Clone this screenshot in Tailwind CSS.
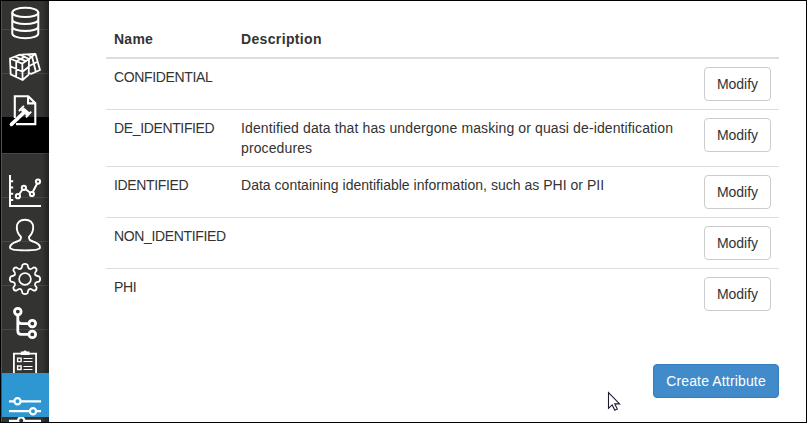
<!DOCTYPE html>
<html lang="en">
<head>
<meta charset="utf-8">
<title>Attributes</title>
<script src="https://cdn.jsdelivr.net/npm/@tailwindcss/browser@4"></script>
</head>
<body class="bg-white">
<div class="flex w-[807px] h-[423px] overflow-hidden border border-black bg-white font-['Liberation_Sans',Arial,sans-serif] text-sm leading-5 text-[#333]">
  <nav class="w-12 h-full shrink-0 flex flex-col overflow-hidden border-l border-[#40517a] bg-[linear-gradient(to_right,transparent_40px,#00000055_47px),linear-gradient(#333331_28px,#484846_28px,#484846_29px,#333331_29px,#333331_72px,#484846_72px,#484846_73px,#333331_73px,#333331_116px,#000_116px,#000_152px,#484846_152px,#484846_153px,#333331_153px,#333331_196px,#484846_196px,#484846_197px,#333331_197px,#333331_240px,#484846_240px,#484846_241px,#333331_241px,#333331_284px,#484846_284px,#484846_285px,#333331_285px,#333331_328px,#484846_328px,#484846_329px,#333331_329px)]">
    <svg class="w-[47px] h-11 shrink-0" viewBox="2 1 47 44" fill="none" stroke="#fff" stroke-width="2">
      <ellipse cx="25.3" cy="12.4" rx="13" ry="4.7"/>
      <path d="M12.3 12.4V33.6C12.3 36.2 18 38.3 25.3 38.3S38.3 36.2 38.3 33.6V12.4M12.3 19.4C12.3 22 18 24.1 25.3 24.1S38.3 22 38.3 19.4M12.3 26.4C12.3 29 18 31.1 25.3 31.1S38.3 29 38.3 26.4"/>
    </svg>
    <svg class="w-[47px] h-11 shrink-0" viewBox="2 45 47 44" fill="none" stroke="#fff" stroke-width="1.8" stroke-linejoin="round">
      <path d="M10 58.5L20 54.6L29 59L28.7 74.6L22.6 80L10.7 74.4ZM10 58.5L22.3 63.6L29 59M22.3 63.6L22.6 80M16.2 61.2V77M10.4 66.3L22.5 71.8L28.8 66.8M14.8 56.6L26 61.2M16.2 61.2L24.8 56.8"/>
      <path d="M21.5 54.6L35.4 53.8L40 70L31.2 73.8L29 73M29 59L35.4 53.8M29.2 66L37.5 61.8M32.2 57L35.8 71.8M27.5 54.4L31.8 56.9"/>
    </svg>
    <svg class="w-[47px] h-11 shrink-0" viewBox="2 89 47 44" fill="none" stroke="#fff" stroke-width="2.1">
      <path d="M14.8 118V96.2H28.3L35.3 103.2V124.1H16M28.1 96V103.4H35.4"/>
      <path d="M11.4 124.4L23.5 113" stroke-width="3.6" stroke-linecap="round"/>
      <path d="M20.6 110.6L23.8 107.4L30 112.8L26.7 116Z" fill="#fff" stroke="none"/>
      <path d="M18.9 111L23.9 105.8M26 117.3L31.2 111.6" stroke-width="1.9"/>
    </svg>
    <div class="h-9 shrink-0"></div>
    <svg class="w-[47px] h-11 shrink-0" viewBox="2 169 47 44" fill="none" stroke="#fff" stroke-width="2">
      <path d="M10 175V206H41M10 181.3H13.2M10 187.5H13.2M10 193.7H13.2M10 199.9H13.2"/>
      <path d="M19.2 194.3L22.5 189.5M25.8 189.3L30.2 192.7M32.9 191.8L37 183.7"/>
      <circle cx="17.9" cy="196.2" r="2.1"/><circle cx="23.9" cy="187.8" r="2.1"/><circle cx="31.9" cy="194" r="2.1"/><circle cx="38" cy="181.6" r="2.1"/>
    </svg>
    <svg class="w-[47px] h-11 shrink-0" viewBox="2 213 47 44" fill="none" stroke="#fff" stroke-width="1.9" stroke-linejoin="round">
      <path d="M21 237C18 234 16.8 231 16.8 227.5C16.8 222.7 20 219.7 25 219.7S33.2 222.7 33.2 227.5C33.2 231 32 234 29 237C29 240 30 240.5 33 241.5C37.5 243 40 244.5 40 247.5C40 249.4 34 250.4 25 250.4S10 249.4 10 247.5C10 244.5 12.5 243 17 241.5C20 240.5 21 240 21 237Z"/>
    </svg>
    <svg class="w-[47px] h-11 shrink-0" viewBox="2 257 47 44" fill="none" stroke="#fff" stroke-width="1.7" stroke-linejoin="round">
      <circle cx="25" cy="279" r="5.9"/>
      <g transform="translate(25 279)">
        <path d="M-2.6 -14.2Q0 -16.2 2.6 -14.2Q3 -10.2 5 -9.9Q6.2 -9.6 8.6 -11.7Q11.6 -11.6 11.7 -8.6Q9.6 -6.2 9.9 -5Q10.2 -3 14.2 -2.6Q16.2 0 14.2 2.6Q10.2 3 9.9 5Q9.6 6.2 11.7 8.6Q11.6 11.6 8.6 11.7Q6.2 9.6 5 9.9Q3 10.2 2.6 14.2Q0 16.2 -2.6 14.2Q-3 10.2 -5 9.9Q-6.2 9.6 -8.6 11.7Q-11.6 11.6 -11.7 8.6Q-9.6 6.2 -9.9 5Q-10.2 3 -14.2 2.6Q-16.2 0 -14.2 -2.6Q-10.2 -3 -9.9 -5Q-9.6 -6.2 -11.7 -8.6Q-11.6 -11.6 -8.6 -11.7Q-6.2 -9.6 -5 -9.9Q-3 -10.2 -2.6 -14.2Z"/>
      </g>
    </svg>
    <svg class="w-[47px] h-11 shrink-0" viewBox="2 301 47 44" fill="none" stroke="#fff" stroke-width="2.8">
      <circle cx="17.8" cy="311.6" r="3.3"/><circle cx="32.3" cy="323.6" r="3.3"/><circle cx="32.3" cy="334.4" r="3.3"/>
      <path d="M17.8 315V331Q17.8 334.4 21.2 334.4H29M17.8 319.5Q17.8 323.6 21.8 323.6H29"/>
    </svg>
    <svg class="w-[47px] h-7 shrink-0" viewBox="2 345 47 28" fill="none" stroke="#fff" stroke-width="1.8">
      <path d="M13.9 374V353.6H36.1V374"/>
      <path d="M21.7 354V352.4H23.8Q25 350.4 26.2 352.4H28.6V354Z" fill="#fff"/>
      <path d="M17.6 358.1H21.1V361.6H17.6ZM17.6 366H21.1V369.5H17.6Z" stroke-width="1.4"/>
      <path d="M23.5 358.5H32.5M23.5 361.5H32.5M23.5 366.5H32.5M23.5 369.5H32.5" stroke-width="1.1"/>
    </svg>
    <svg class="w-[47px] h-11 shrink-0 bg-[#2e97d1]" viewBox="2 373 47 44" fill="none" stroke="#fff" stroke-width="2.2">
      <path d="M9 401.3H14M21 401.3H41M9 411.2H29.5M36.5 411.2H41"/>
      <circle cx="17.5" cy="401.3" r="3.1"/><circle cx="33" cy="411.2" r="3.1"/>
    </svg>
    <svg class="w-[47px] h-[5px] shrink-0" viewBox="2 417 47 5" fill="none" stroke="#fff" stroke-width="2.2">
      <path d="M9 420.8H17.5M24.5 420.8H41"/><circle cx="21.2" cy="420.5" r="3.1"/>
    </svg>
  </nav>
  <main class="flex-1 pl-[57px] pr-[27px] pt-5">
    <table class="w-full table-fixed border-separate border-spacing-0 text-left">
      <colgroup><col class="w-[127px]"><col class="w-[463px]"><col></colgroup>
      <thead><tr class="font-bold"><th class="p-2 border-b-2 border-[#ddd] tracking-[0.25px]">Name</th><th class="p-2 border-b-2 border-[#ddd] tracking-[0.35px]">Description</th><th class="p-2 border-b-2 border-[#ddd]"></th></tr></thead>
      <tbody class="align-top [&_td]:p-2 [&_tr+tr_td]:border-t [&_td]:border-[#ddd] [&_td:first-child]:tracking-[-0.36px] [&_button]:block [&_button]:ml-auto [&_button]:w-[67px] [&_button]:h-[34px] [&_button]:rounded [&_button]:border [&_button]:border-[#ccc]">
        <tr><td>CONFIDENTIAL</td><td></td><td><button>Modify</button></td></tr>
        <tr><td>DE_IDENTIFIED</td><td class="tracking-[0.115px]">Identified data that has undergone masking or quasi de-identification procedures</td><td><button>Modify</button></td></tr>
        <tr><td>IDENTIFIED</td><td class="tracking-[0.02px]">Data containing identifiable information, such as PHI or PII</td><td><button>Modify</button></td></tr>
        <tr><td>NON_IDENTIFIED</td><td></td><td><button>Modify</button></td></tr>
        <tr><td>PHI</td><td></td><td><button>Modify</button></td></tr>
      </tbody>
    </table>
    <div class="flex justify-end pt-[45px]">
      <button class="w-[126px] h-[34px] rounded border border-[#357ebd] bg-[#428bca] text-white tracking-[0.15px]">Create Attribute</button>
    </div>
  </main>
</div>
<svg class="absolute left-[607px] top-[391px] w-[14px] h-[21px]" viewBox="0 0 14 21" fill="#fff" stroke="#1c1c30" stroke-width="1.1">
  <path d="M1.5 1.5V17.3L5.2 13.9L7.8 19.3L10.3 18.1L7.8 12.9H12.6Z"/>
</svg>
</body>
</html>
